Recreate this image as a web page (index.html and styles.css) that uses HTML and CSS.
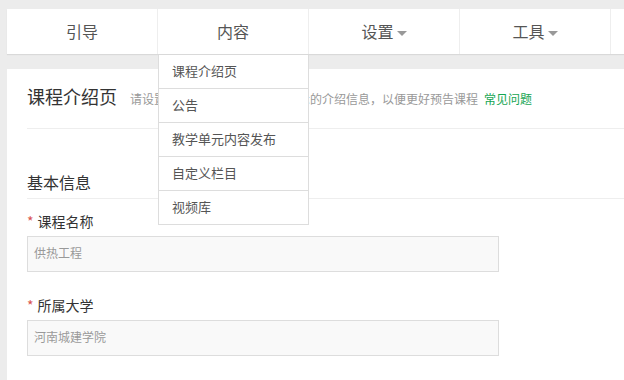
FILE: index.html
```html
<!DOCTYPE html>
<html lang="zh-CN">
<head>
    <meta charset="UTF-8">
    <title>课程介绍页</title>
    <link rel="stylesheet" href="styles.css">
</head>
<body>
    <div class="page">
        <div class="nav">
            <div class="nav-item">引导</div>
            <div class="nav-item">内容
                <ul class="dropdown">
                    <li>课程介绍页</li>
                    <li>公告</li>
                    <li>教学单元内容发布</li>
                    <li>自定义栏目</li>
                    <li>视频库</li>
                </ul>
            </div>
            <div class="nav-item">设置<span class="caret"></span></div>
            <div class="nav-item">工具<span class="caret"></span></div>
            <div class="nav-item"></div>
        </div>

        <div class="card">
            <div class="card-header">
                <span class="title">课程介绍页</span>
                <span class="sub">请设置课程在课程介绍页中所展示的介绍信息，以便更好预告课程</span>
                <a class="faq" href="#">常见问题</a>
            </div>

            <div class="section-title">基本信息</div>

            <div class="form-group">
                <label><span class="req">*</span>课程名称</label>
                <div class="field">供热工程</div>
            </div>

            <div class="form-group">
                <label><span class="req">*</span>所属大学</label>
                <div class="field">河南城建学院</div>
            </div>
        </div>
    </div>
</body>
</html>
```

FILE: styles.css
```css
body {
    margin: 0;
    background: #ececec;
    font-family: "Noto Sans CJK SC", "Liberation Sans", sans-serif;
    overflow: hidden;
}
.page {
    width: 800px;
    padding: 9px 0 0 7px;
}
.nav {
    display: flex;
    height: 45px;
    background: white;
    box-shadow: 0 1px 1px rgba(0,0,0,0.08);
    position: relative;
    z-index: 2;
}
.nav-item {
    position: relative;
    width: 150px;
    border-right: 1px solid #eee;
    text-align: center;
    line-height: 45px;
    font-size: 16px;
    color: #555;
}
.caret {
    display: inline-block;
    margin-left: 3px;
    vertical-align: middle;
    border-left: 5px solid transparent;
    border-right: 5px solid transparent;
    border-top: 5px solid #999;
}
.dropdown {
    position: absolute;
    top: 46px;
    left: 0;
    width: 151px;
    box-sizing: border-box;
    margin: 0;
    padding: 0;
    list-style: none;
    background: white;
    border: 1px solid #ddd;
    border-top: none;
    text-align: left;
}
.dropdown li {
    height: 33px;
    line-height: 31px;
    padding-left: 13px;
    font-size: 13px;
    color: #555;
    border-bottom: 1px solid #ddd;
}
.dropdown li:last-child {
    border-bottom: none;
}
.card {
    margin-top: 15px;
    background: white;
    padding: 0 20px;
    height: 400px;
}
.card-header {
    height: 55px;
    padding-bottom: 4px;
    display: flex;
    align-items: baseline;
    line-height: 55px;
    border-bottom: 1px solid #eee;
}
.title {
    font-size: 18px;
    color: #333;
    margin-right: 13px;
}
.sub {
    font-size: 12px;
    color: #999;
    margin-right: 6px;
}
.faq {
    font-size: 12px;
    color: #15a552;
    text-decoration: none;
}
.section-title {
    padding: 41px 0 4px;
    line-height: 24px;
    font-size: 16px;
    color: #333;
    border-bottom: 1px solid #eee;
}
.form-group {
    margin-top: 12px;
}
.form-group + .form-group {
    margin-top: 23px;
}
label {
    display: block;
    line-height: 20px;
    font-size: 14px;
    color: #333;
    margin-bottom: 5px;
}
.req {
    color: #d9534f;
    margin-right: 4px;
}
.field {
    width: 472px;
    height: 36px;
    box-sizing: border-box;
    padding-left: 6px;
    line-height: 32px;
    font-size: 12px;
    color: #999;
    background: #f9f9f9;
    border: 1px solid #ddd;
}
```
